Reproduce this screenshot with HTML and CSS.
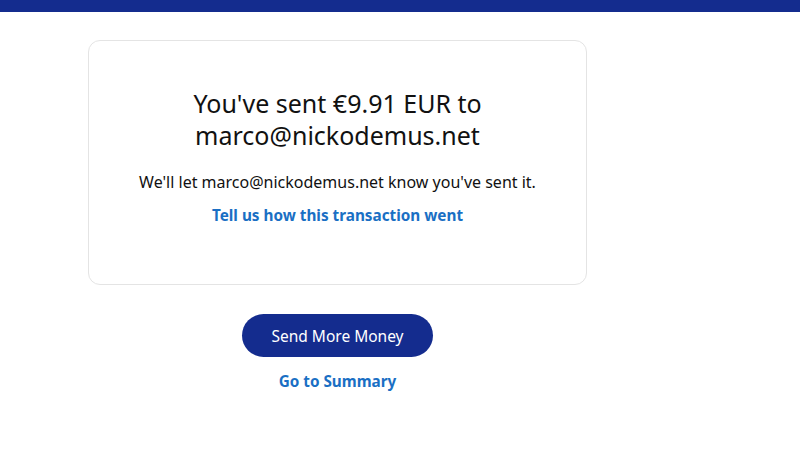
FILE: index.html
```html
<!DOCTYPE html>
<html lang="en">
<head>
    <meta charset="UTF-8">
    <meta name="viewport" content="width=device-width, initial-scale=1.0">
    <title>Payment Sent</title>
    <link rel="stylesheet" href="styles.css">
</head>
<body>
    <div class="topbar"></div>
    <main class="page">
        <div class="card">
            <h1>You've sent €9.91 EUR to marco@nickodemus.net</h1>
            <p class="note">We'll let marco@nickodemus.net know you've sent it.</p>
            <a href="#" class="link">Tell us how this transaction went</a>
        </div>
        <div class="actions">
            <button type="button" class="btn">Send More Money</button>
            <a href="#" class="link">Go to Summary</a>
        </div>
    </main>
</body>
</html>
```

FILE: styles.css
```css
body {
    margin: 0;
    padding: 0;
    font-family: "Noto Sans", Arial, sans-serif;
    color: #111;
    background-color: #fff;
}
.topbar {
    height: 12px;
    background-color: #142c8e;
}
.page {
    width: 499px;
    margin-left: 88px;
    padding-top: 28px;
}
.card {
    border: 1px solid #e4e4e4;
    border-radius: 12px;
    padding: 46px 30px 0;
    height: 197px;
    text-align: center;
}
h1 {
    margin: 0 auto 20px;
    width: 320px;
    font-size: 25px;
    font-weight: 400;
    line-height: 32px;
}
.note {
    margin: 0 0 11px;
    font-size: 16px;
    line-height: 22px;
}
.link {
    display: inline-block;
    color: #1a6fc4;
    font-weight: 700;
    font-size: 15.3px;
    text-decoration: none;
}
.actions {
    display: flex;
    flex-direction: column;
    align-items: center;
    gap: 14px;
    padding-top: 29px;
}
.btn {
    width: 191px;
    height: 43px;
    border: none;
    border-radius: 22px;
    background-color: #142c8e;
    color: #fff;
    font-family: inherit;
    font-size: 15.5px;
    cursor: pointer;
}
```
